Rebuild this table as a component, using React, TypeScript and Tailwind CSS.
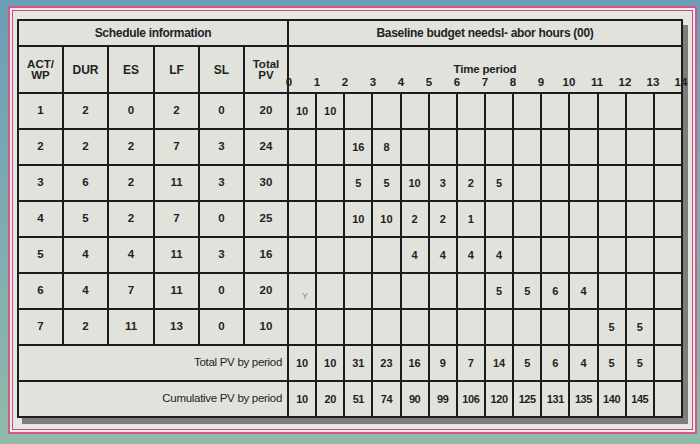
import React from 'react';

const left = [
  ['1', '2', '0', '2', '0', '20'],
  ['2', '2', '2', '7', '3', '24'],
  ['3', '6', '2', '11', '3', '30'],
  ['4', '5', '2', '7', '0', '25'],
  ['5', '4', '4', '11', '3', '16'],
  ['6', '4', '7', '11', '0', '20'],
  ['7', '2', '11', '13', '0', '10'],
];

// start column + values for each activity
const budget: Array<[number, string[]]> = [
  [0, ['10', '10']],
  [2, ['16', '8']],
  [2, ['5', '5', '10', '3', '2', '5']],
  [2, ['10', '10', '2', '2', '1']],
  [4, ['4', '4', '4', '4']],
  [7, ['5', '5', '6', '4']],
  [11, ['5', '5']],
];

const totals = ['10', '10', '31', '23', '16', '9', '7', '14', '5', '6', '4', '5', '5', ''];
const cumulative = ['10', '20', '51', '74', '90', '99', '106', '120', '125', '131', '135', '140', '145', ''];

const cell = 'bg-[#e2e2dd] flex items-center justify-center';

function rowCells(start: number, vals: string[]) {
  const out: string[] = Array(14).fill('');
  vals.forEach((v, i) => (out[start + i] = v));
  return out;
}

export default function App() {
  return (
    <div
      className="w-[700px] h-[444px] bg-gradient-to-b from-[#6c9db6] to-[#8fbba9] pt-[6px] pl-[8px] overflow-hidden"
      style={{ fontFamily: '"Liberation Sans", Arial, sans-serif' }}
    >
      <div className="w-[689px] h-[428px] border-2 border-[#d4588a] bg-[#eceaeb] p-[2px]">
        <div className="w-full h-full border border-[#c95079] bg-[#e6e6e2] pl-[4px] pt-[8px]">
          <div className="w-[666px] grid grid-cols-[43px_43px_44px_43px_43px_42px_repeat(14,minmax(0,1fr))] grid-rows-[24px_45px_repeat(9,34px)] gap-[2px] border-2 border-[#1c1c1c] bg-[#1c1c1c] text-[#222] shadow-[5px_6px_0_rgba(90,90,90,0.75)]">
            <div className={`${cell} col-span-6 text-[12px] font-bold tracking-[-0.3px]`}>Schedule information</div>
            <div className={`${cell} col-span-14 text-[12px] font-bold tracking-[-0.3px]`}>
              Baseline budget needsl- abor hours (00)
            </div>

            <div className={`${cell} flex-col text-[11.5px] font-bold leading-[11px]`}>
              <span>ACT/</span>
              <span>WP</span>
            </div>
            <div className={`${cell} text-[12px] font-bold`}>DUR</div>
            <div className={`${cell} text-[12px] font-bold`}>ES</div>
            <div className={`${cell} text-[12px] font-bold`}>LF</div>
            <div className={`${cell} text-[12px] font-bold`}>SL</div>
            <div className={`${cell} flex-col text-[11.5px] font-bold leading-[11px]`}>
              <span>Total</span>
              <span>PV</span>
            </div>
            <div className="col-span-14 bg-[#e2e2dd] flex flex-col items-center justify-end pb-[3px]">
              <span className="text-[11.5px] font-bold tracking-[-0.2px] leading-[13px]">Time period</span>
              <div className="grid grid-cols-[repeat(15,minmax(0,1fr))] w-[calc(100%+28px)] text-[11.5px] font-bold leading-[13px]">
                {Array.from({ length: 15 }, (_, i) => (
                  <span key={i} className="text-center">
                    {i}
                  </span>
                ))}
              </div>
            </div>

            {left.map((r, ri) => (
              <React.Fragment key={ri}>
                {r.map((v, ci) => (
                  <div key={ci} className={`${cell} text-[11.5px] font-bold`}>
                    {v}
                  </div>
                ))}
                {rowCells(budget[ri][0], budget[ri][1]).map((v, ci) => (
                  <div key={`t${ci}`} className={`${cell} text-[11px] font-bold relative`}>
                    {v}
                    {ri === 5 && ci === 0 && (
                      <span className="absolute left-[13px] top-[16px] text-[9px] font-normal text-[#8a8a80]">Y</span>
                    )}
                  </div>
                ))}
              </React.Fragment>
            ))}

            <div className="col-span-6 bg-[#e2e2dd] flex items-center justify-end pr-[5px] text-[11.5px] tracking-[-0.3px]">
              Total PV by period
            </div>
            {totals.map((v, i) => (
              <div key={`tot${i}`} className={`${cell} text-[11px] font-semibold`}>
                {v}
              </div>
            ))}
            <div className="col-span-6 bg-[#e2e2dd] flex items-center justify-end pr-[5px] text-[11.5px] tracking-[-0.3px]">
              Cumulative PV by period
            </div>
            {cumulative.map((v, i) => (
              <div key={`cum${i}`} className={`${cell} text-[11px] font-semibold tracking-[-0.4px]`}>
                {v}
              </div>
            ))}
          </div>
        </div>
      </div>
    </div>
  );
}
